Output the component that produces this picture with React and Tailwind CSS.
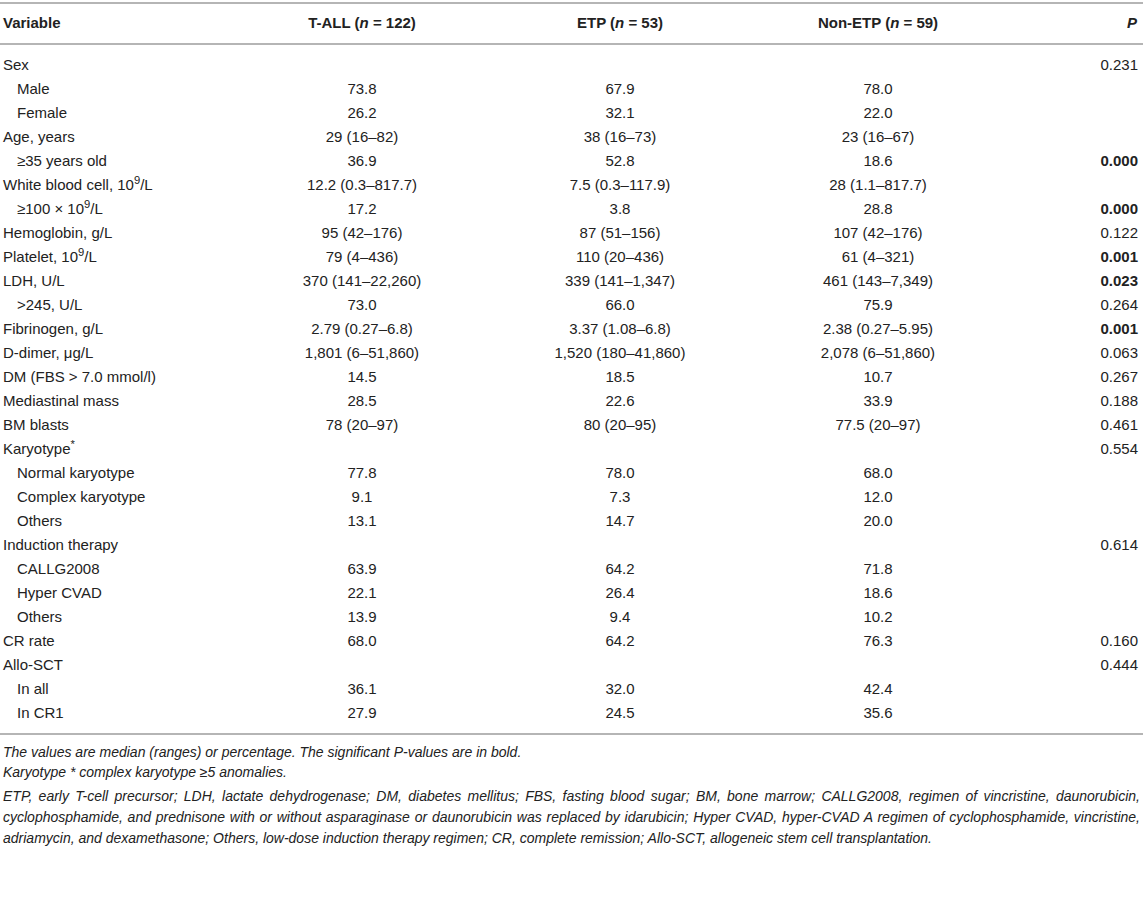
const rows = [
  ['Sex', false, '', '', '', '0.231', false],
  ['Male', true, '73.8', '67.9', '78.0', '', false],
  ['Female', true, '26.2', '32.1', '22.0', '', false],
  ['Age, years', false, '29 (16–82)', '38 (16–73)', '23 (16–67)', '', false],
  ['≥35 years old', true, '36.9', '52.8', '18.6', '0.000', true],
  ['WBC', false, '12.2 (0.3–817.7)', '7.5 (0.3–117.9)', '28 (1.1–817.7)', '', false],
  ['WBC100', true, '17.2', '3.8', '28.8', '0.000', true],
  ['Hemoglobin, g/L', false, '95 (42–176)', '87 (51–156)', '107 (42–176)', '0.122', false],
  ['PLT', false, '79 (4–436)', '110 (20–436)', '61 (4–321)', '0.001', true],
  ['LDH, U/L', false, '370 (141–22,260)', '339 (141–1,347)', '461 (143–7,349)', '0.023', true],
  ['>245, U/L', true, '73.0', '66.0', '75.9', '0.264', false],
  ['Fibrinogen, g/L', false, '2.79 (0.27–6.8)', '3.37 (1.08–6.8)', '2.38 (0.27–5.95)', '0.001', true],
  ['D-dimer, μg/L', false, '1,801 (6–51,860)', '1,520 (180–41,860)', '2,078 (6–51,860)', '0.063', false],
  ['DM (FBS > 7.0 mmol/l)', false, '14.5', '18.5', '10.7', '0.267', false],
  ['Mediastinal mass', false, '28.5', '22.6', '33.9', '0.188', false],
  ['BM blasts', false, '78 (20–97)', '80 (20–95)', '77.5 (20–97)', '0.461', false],
  ['KARYO', false, '', '', '', '0.554', false],
  ['Normal karyotype', true, '77.8', '78.0', '68.0', '', false],
  ['Complex karyotype', true, '9.1', '7.3', '12.0', '', false],
  ['Others', true, '13.1', '14.7', '20.0', '', false],
  ['Induction therapy', false, '', '', '', '0.614', false],
  ['CALLG2008', true, '63.9', '64.2', '71.8', '', false],
  ['Hyper CVAD', true, '22.1', '26.4', '18.6', '', false],
  ['Others', true, '13.9', '9.4', '10.2', '', false],
  ['CR rate', false, '68.0', '64.2', '76.3', '0.160', false],
  ['Allo-SCT', false, '', '', '', '0.444', false],
  ['In all', true, '36.1', '32.0', '42.4', '', false],
  ['In CR1', true, '27.9', '24.5', '35.6', '', false],
];

function Label({ text }) {
  if (text === 'WBC') return <>White blood cell, 10<sup>9</sup>/L</>;
  if (text === 'WBC100') return <>≥100 × 10<sup>9</sup>/L</>;
  if (text === 'PLT') return <>Platelet, 10<sup>9</sup>/L</>;
  if (text === 'KARYO') return <>Karyotype<sup>*</sup></>;
  return text;
}

export default function App() {
  return (
    <div className="w-[1143px] bg-white pt-[2px] text-[#222] font-['Liberation_Sans',Arial,sans-serif]">
      <table className="w-full table-fixed border-collapse border-t-2 border-b-2 border-[#b5b5b5] text-[15px]">
        <colgroup>
          <col className="w-[228px]" />
          <col className="w-[268px]" />
          <col className="w-[248px]" />
          <col className="w-[268px]" />
          <col className="w-[131px]" />
        </colgroup>
        <thead>
          <tr className="h-[41px] border-b-2 border-[#b5b5b5] font-bold">
            <th className="text-left pl-[3px]">Variable</th>
            <th className="text-center">T-ALL (<i>n</i> = 122)</th>
            <th className="text-center">ETP (<i>n</i> = 53)</th>
            <th className="text-center">Non-ETP (<i>n</i> = 59)</th>
            <th className="text-right pr-[6px]"><i>P</i></th>
          </tr>
        </thead>
        <tbody>
          <tr className="h-[9px]"><td colSpan={5}></td></tr>
          {rows.map((r, i) => (
            <tr key={i} className="h-[24px]">
              <td className={r[1] ? 'pl-[17px]' : 'pl-[3px]'}><Label text={r[0]} /></td>
              <td className="text-center">{r[2]}</td>
              <td className="text-center">{r[3]}</td>
              <td className="text-center">{r[4]}</td>
              <td className={'text-right pr-[5px]' + (r[6] ? ' font-bold' : '')}>{r[5]}</td>
            </tr>
          ))}
          <tr className="h-[9px]"><td colSpan={5}></td></tr>
        </tbody>
      </table>
      <div className="italic px-[3px] pt-[7px] text-[14px]">
        <p className="leading-[20px]">The values are median (ranges) or percentage. The significant P-values are in bold.</p>
        <p className="leading-[20px]">Karyotype * complex karyotype ≥5 anomalies.</p>
        <div className="mt-[4px] leading-[21px] text-justify">
          <p className="[text-align-last:justify]">ETP, early T-cell precursor; LDH, lactate dehydrogenase; DM, diabetes mellitus; FBS, fasting blood sugar; BM, bone marrow; CALLG2008, regimen of vincristine, daunorubicin,</p>
          <p className="[text-align-last:justify]">cyclophosphamide, and prednisone with or without asparaginase or daunorubicin was replaced by idarubicin; Hyper CVAD, hyper-CVAD A regimen of cyclophosphamide, vincristine,</p>
          <p>adriamycin, and dexamethasone; Others, low-dose induction therapy regimen; CR, complete remission; Allo-SCT, allogeneic stem cell transplantation.</p>
        </div>
      </div>
    </div>
  );
}
